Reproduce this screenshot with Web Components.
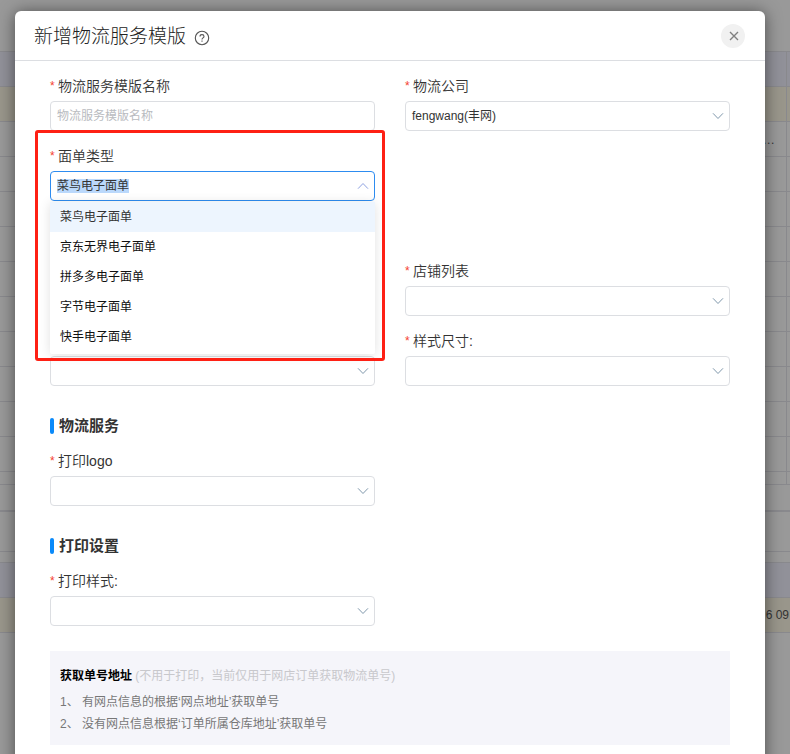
<!DOCTYPE html>
<html lang="zh-CN">
<head>
<meta charset="utf-8">
<title>新增物流服务模版</title>
<style>
html,body{margin:0;height:100%;overflow:hidden}
body{font-family:"Liberation Sans","Noto Sans CJK SC",sans-serif;font-size:12px;color:#333;background:#999}
</style>
</head>
<body>
<app-page></app-page>
<script>
function define(name, html, setup) {
  const t = document.createElement('template');
  t.innerHTML = html;
  customElements.define(name, class extends HTMLElement {
    constructor() {
      super();
      this.attachShadow({mode: 'open'}).append(t.content.cloneNode(true));
    }
    connectedCallback() {
      if (setup && !this.ready) { this.ready = true; setup(this, this.shadowRoot); }
    }
  });
}

define('backdrop-table', `<style>
:host{display:block;box-sizing:border-box;height:754px;background:#999;overflow:hidden;color:#333}
.r{display:grid;grid-template-columns:1fr 3px;box-sizing:border-box;border-top:1px solid #89898d;height:35px;line-height:35px;text-align:right}
.c{padding-right:15px;white-space:pre}
.v .c{border-right:1px solid #89898d}
.h{background:#919199}.y{background:#99968b}
.thick{border-top-width:2px}
</style><div id="rows"></div>`, (el, root) => {
  const rows = [[51,'n'],[35,'h v'],[35,'y v'],[35,'v','...'],[35,'v'],[35,'v'],[35,'v'],[35,'v'],[35,'v'],[35,'v'],[35,'v'],[35,'v'],[35,'v'],[13,'v'],[26,''],[41,'thick'],[11,''],[35,'h'],[35,'y','6 09'],[122,'']];
  const box = root.getElementById('rows');
  for (const [h, cls, text] of rows) {
    const r = document.createElement('div');
    r.className = 'r ' + cls;
    r.style.height = h + 'px';
    if (cls === 'n') r.style.borderTop = '0';
    const c = document.createElement('div');
    c.className = 'c';
    c.textContent = text || '';
    if (text === '6 09') c.style.paddingRight = '0', r.style.gridTemplateColumns = '1fr 1px';
    if (text === '...') { c.style.paddingRight = '11px'; c.style.letterSpacing = '.7px'; c.style.lineHeight = '36px'; }
    r.append(c);
    box.append(r);
  }
});

define('help-icon', `<style>:host{display:block;width:16px;height:16px}svg{display:block}</style>
<svg width="16" height="16" viewBox="0 0 16 16" fill="none" stroke="#555" stroke-width="1.1"><circle cx="8" cy="8" r="6.7"/><path d="M6 6.5C6 5.2 6.8 4.6 8 4.6s2 .7 2 1.8c0 1.4-2 1.5-2 3"/><path d="M8 10.6v1.2"/></svg>`);

define('close-button', `<style>:host{display:grid;place-items:center;width:24px;height:24px;border-radius:50%;background:#f1f1f1}svg{display:block;transform:translate(1px,0)}</style>
<svg width="10" height="10" viewBox="0 0 10 10" stroke="#808080" stroke-width="1.4"><path d="M1 1l8 8M9 1L1 9"/></svg>`);

define('chevron-icon', `<style>:host{display:block;width:12px;height:8px;color:#8098ac}:host([up]){transform:scaleY(-1);color:#8ea2e2}svg{display:block}</style>
<svg width="12" height="8" viewBox="0 0 12 8" fill="none" stroke="currentColor" stroke-width="1"><path d="M1 1.3l5 5.2L11 1.3"/></svg>`);

define('form-field', `<style>
:host{display:block;width:325px}
.l{display:flex;height:30px;line-height:30px;font-size:14px;color:#333;white-space:nowrap}
.l i{font-style:normal;color:#f5422f;width:8px;font-size:12px}
.l span{font-weight:350}
</style><div class="l"><i>*</i><span></span></div><slot></slot>`, (el, root) => {
  const label = el.getAttribute('label');
  root.querySelector('span').textContent = label || '';
  if (!label) root.querySelector('.l').style.visibility = 'hidden';
});

define('select-box', `<style>
:host{display:block;position:relative;height:30px}
.b{box-sizing:border-box;height:30px;border:1px solid #dcdee2;border-radius:4px;background:#fff;display:flex;align-items:center;justify-content:space-between;padding:0 5px 0 6px;line-height:16px}
:host([open]) .b{border-color:#2d8cf0}
:host([plain]) chevron-icon{display:none}
:host([plain]) .b{color:#b9bbc0}
:host([open]) .v{background:#bad8fb;line-height:14px}
.v{white-space:nowrap}
</style><div class="b"><span class="v"></span><chevron-icon></chevron-icon></div><slot></slot>`, (el, root) => {
  root.querySelector('.v').textContent = el.getAttribute('value') || '';
  if (el.hasAttribute('open')) root.querySelector('chevron-icon').setAttribute('up', '');
});

define('option-list', `<style>
:host{display:block;position:absolute;z-index:2;left:0;top:31px;width:325px;box-sizing:border-box;height:152px;background:#fff;border-radius:2px;box-shadow:0 1px 12px rgba(0,0,0,.12)}
</style><slot></slot>`);

define('option-item', `<style>
:host{display:block;height:30px;line-height:30px;padding-left:10px;color:#111;white-space:nowrap}
:host([active]){background:#edf5fe;color:#333}
</style><slot></slot>`);

define('section-title', `<style>
:host{display:flex;align-items:center;height:30px;font-size:15px;font-weight:700;color:#333;line-height:30px}
i{width:4px;height:16px;border-radius:2px;background:#0a8afa;margin-right:5px}
</style><i></i><slot></slot>`);

define('address-note', `<style>
:host{display:block;box-sizing:border-box;height:94px;background:#f5f5fa;padding:14px 10px;line-height:22px;color:#777;white-space:nowrap}
.t{color:#c8c8cc;margin-bottom:4px}b{color:#000}
</style><div class="t"><b>获取单号地址</b> (不用于打印，当前仅用于网店订单获取物流单号)</div><div>1、 有网点信息的根据‘网点地址’获取单号</div><div>2、 没有网点信息根据‘订单所属仓库地址’获取单号</div>`);

define('highlight-frame', `<style>
:host{display:block;position:absolute;z-index:3;left:-15px;top:-11px;width:350px;height:231px;box-sizing:border-box;border:3px solid #fe2014;border-radius:3px;pointer-events:none}
</style>`);

define('modal-dialog', `<style>
:host{display:block;box-sizing:border-box;width:750px;height:800px;background:#fff;border-radius:6px;box-shadow:0 1px 16px rgba(0,0,0,.5)}
header{display:flex;align-items:center;height:49px;padding:0 20px 0 19px;border-bottom:1px solid #dcdee2;box-sizing:content-box}
h1{margin:0;font-size:19px;font-weight:300;line-height:49px;padding-top:1px;color:#222}
help-icon{margin:5px auto 0 8px}
main{padding:10px 35px 0}
</style><header><h1></h1><help-icon></help-icon><close-button></close-button></header><main><slot></slot></main>`, (el, root) => {
  root.querySelector('h1').textContent = el.getAttribute('heading');
});

define('app-page', `<style>
:host{display:grid;height:754px;overflow:hidden}
backdrop-table,.over{grid-area:1/1;min-width:0}
.over{padding:11px 0 0 15px;z-index:1}
.row{display:grid;grid-template-columns:325px 325px;column-gap:30px;height:60px;margin-bottom:10px}
.gap{margin-bottom:55px;position:relative}
.last{margin-bottom:25px}
section-title{margin-bottom:5px}
</style>
<backdrop-table></backdrop-table>
<div class="over"><modal-dialog heading="新增物流服务模版">
<div class="row"><form-field label="物流服务模版名称"><select-box plain value="物流服务模版名称"></select-box></form-field><form-field label="物流公司"><select-box value="fengwang(丰网)"></select-box></form-field></div>
<div class="row gap"><form-field label="面单类型"><select-box open value="菜鸟电子面单"><option-list><option-item active>菜鸟电子面单</option-item><option-item>京东无界电子面单</option-item><option-item>拼多多电子面单</option-item><option-item>字节电子面单</option-item><option-item>快手电子面单</option-item></option-list></select-box></form-field><highlight-frame></highlight-frame></div>
<div class="row"><form-field></form-field><form-field label="店铺列表"><select-box></select-box></form-field></div>
<div class="row last"><form-field><select-box></select-box></form-field><form-field label="样式尺寸:"><select-box></select-box></form-field></div>
<section-title>物流服务</section-title>
<div class="row last"><form-field label="打印logo"><select-box></select-box></form-field></div>
<section-title>打印设置</section-title>
<div class="row last"><form-field label="打印样式:"><select-box></select-box></form-field></div>
<address-note></address-note>
</modal-dialog></div>`);
</script>
</body>
</html>
